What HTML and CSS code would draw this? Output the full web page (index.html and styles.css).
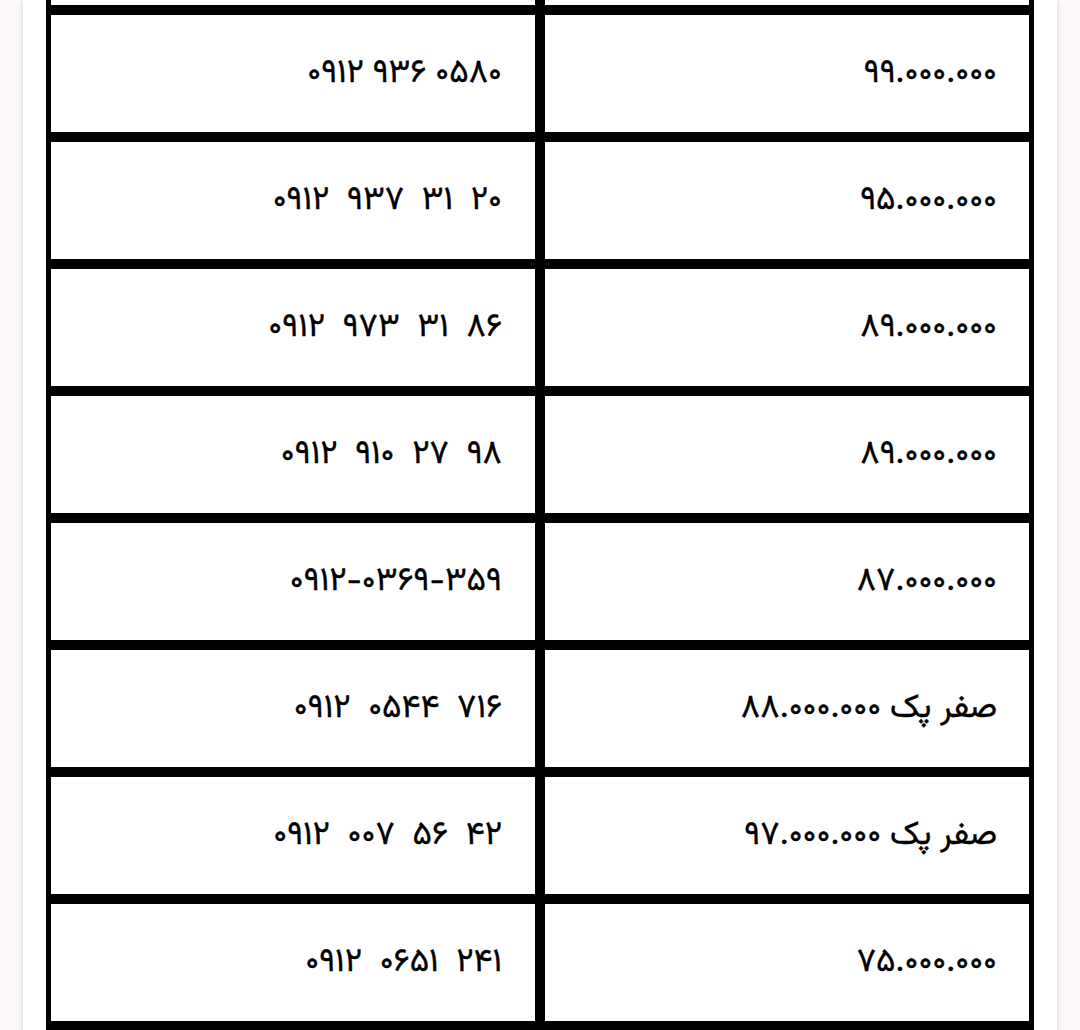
FILE: index.html
```html
<!DOCTYPE html>
<html lang="fa">
<head>
<meta charset="utf-8">
<link rel="stylesheet" href="styles.css">
</head>
<body>
<div class="page">
  <div class="card">
    <div class="table">
      <div class="cell partial"></div><div class="cell partial"></div>
      <div class="cell phone">۰۹۱۲ ۹۳۶ ۰۵۸۰</div><div class="cell price">۹۹.۰۰۰.۰۰۰</div>
      <div class="cell phone">۰۹۱۲  ۹۳۷  ۳۱  ۲۰</div><div class="cell price">۹۵.۰۰۰.۰۰۰</div>
      <div class="cell phone">۰۹۱۲  ۹۷۳  ۳۱  ۸۶</div><div class="cell price">۸۹.۰۰۰.۰۰۰</div>
      <div class="cell phone">۰۹۱۲  ۹۱۰  ۲۷  ۹۸</div><div class="cell price">۸۹.۰۰۰.۰۰۰</div>
      <div class="cell phone">۰۹۱۲-۰۳۶۹-۳۵۹</div><div class="cell price">۸۷.۰۰۰.۰۰۰</div>
      <div class="cell phone">۰۹۱۲  ۰۵۴۴  ۷۱۶</div><div class="cell price">صفر پک ۸۸.۰۰۰.۰۰۰</div>
      <div class="cell phone">۰۹۱۲  ۰۰۷  ۵۶  ۴۲</div><div class="cell price">صفر پک ۹۷.۰۰۰.۰۰۰</div>
      <div class="cell phone">۰۹۱۲  ۰۶۵۱  ۲۴۱</div><div class="cell price">۷۵.۰۰۰.۰۰۰</div>
    </div>
  </div>
</div>
</body>
</html>
```
FILE: styles.css
```css
html, body {
  margin: 0;
  padding: 0;
  background: #fcf8fb;
  height: 1030px;
  overflow: hidden;
}
.page {
  padding: 0 23px;
}
.card {
  background: #ffffff;
  height: 1100px;
  padding: 0 23px;
  box-shadow: 0 0 6px rgba(0, 0, 0, 0.16);
}
.table {
  display: grid;
  grid-template-columns: 1fr 1fr;
  grid-template-rows: 5px;
  grid-auto-rows: 117px;
  gap: 10px;
  background: #000;
  padding: 0 5px 10px;
}
.table .partial {
  height: 5px;
}
.cell {
  background: #fff;
  display: flex;
  align-items: center;
  justify-content: flex-end;
  padding: 0 33px 0 32px;
  font-family: "Vazirmatn", "Vazir", "Noto Sans Arabic", "Noto Naskh Arabic", "DejaVu Sans", sans-serif;
  font-size: 33px;
  font-weight: 400;
  color: #000;
  white-space: pre;
  -webkit-text-stroke: 0.4px #000;
}
.phone {
  direction: ltr;
}
.price {
  direction: rtl;
  justify-content: flex-start;
  padding: 0 32px 0 33px;
}
```
